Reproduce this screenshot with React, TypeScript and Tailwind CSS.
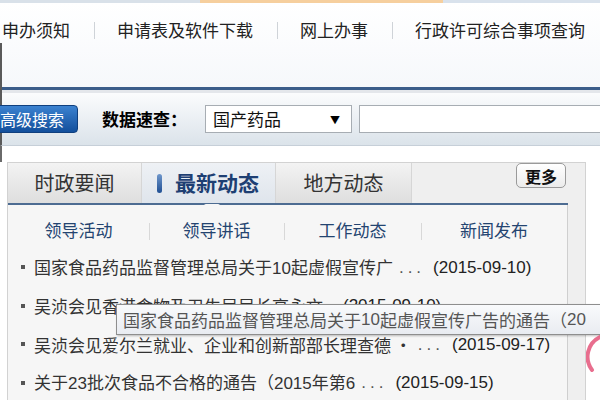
import React from "react";

const cjk = { fontFamily: '"Noto Sans CJK SC", "Noto Sans", sans-serif' };
const latin = { fontFamily: '"Liberation Sans", "Noto Sans CJK SC", sans-serif' };

const navItems = ["申办须知", "申请表及软件下载", "网上办事", "行政许可综合事项查询"];
const subNav = [
  { label: "领导活动", w: "w-[141px]" },
  { label: "领导讲话", w: "w-[135px]" },
  { label: "工作动态", w: "w-[137px]" },
  { label: "新闻发布", w: "flex-1" },
];

const news = [
  { title: "国家食品药品监督管理总局关于10起虚假宣传广", dots: true, date: "(2015-09-10)" },
  { title: "吴浈会见香港食物及卫生局局长高永文", dots: false, date: "(2015-09-10)" },
  { title: "吴浈会见爱尔兰就业、企业和创新部部长理查德 ·", dots: true, date: "(2015-09-17)" },
  { title: "关于23批次食品不合格的通告（2015年第6", dots: true, date: "(2015-09-15)" },
];

function Title({ text }: { text: string }) {
  // split ascii digits so they get the narrow latin face
  const parts = text.split(/(\d+)/);
  return (
    <span className="whitespace-nowrap">
      {parts.map((p, i) =>
        /^\d+$/.test(p) ? (
          <span key={i} style={latin}>{p}</span>
        ) : (
          <span key={i}>{p}</span>
        )
      )}
    </span>
  );
}

export default function App() {
  return (
    <div className="relative w-[600px] h-[400px] overflow-hidden bg-white text-[#222]" style={cjk}>
      {/* top strip */}
      <div className="flex h-[3px]">
        <div className="w-[200px] bg-[#d9e1e9]" />
        <div className="w-[243px] bg-[#f6cf9e]" />
        <div className="flex-1 bg-[#d9e2ec]" />
      </div>

      {/* top nav */}
      <div className="h-[84px] bg-gradient-to-b from-white to-[#f6f8fb]">
        <div className="flex items-center h-[40px] pt-[14px] pl-[2px] text-[17px] leading-[26px] text-[#222]">
          {navItems.map((n, i) => (
            <React.Fragment key={n}>
              {i > 0 && <span className="ml-[24px] mr-[22px] h-[17px] w-px bg-[#cfd3d8]" />}
              <span className="whitespace-nowrap">{n}</span>
            </React.Fragment>
          ))}
        </div>
        <div className="h-[44px] border-l-2 border-[#5a5a5a]" />
      </div>
      <div className="h-[3px] bg-[#3b5d8a] border-l-2 border-[#5a5a5a]" />
      <div className="h-[3px] bg-[#e4e7eb] border-l-2 border-[#5a5a5a]" />

      {/* search bar */}
      <div className="flex items-center h-[53px] border-l-2 border-[#5a5a5a] border-b border-b-[#c6cfd8] bg-gradient-to-b from-[#fbfcfd] to-[#dbe3ea]">
        <div className="-ml-[8px] flex items-center h-[28px] w-[84px] pl-[5px] rounded-[4px] bg-gradient-to-b from-[#3b82d0] to-[#124f9c] border border-[#0f3f7e] text-[16px] text-white whitespace-nowrap">
          高级搜索
        </div>
        <span className="ml-[24px] text-[17px] font-bold text-black whitespace-nowrap">数据速查：</span>
        <div className="ml-[18px] flex items-center h-[28px] w-[147px] pl-[7px] pr-[11px] bg-white border border-[#a7adb3] text-[17px] text-[#111]">
          <span className="flex-1 whitespace-nowrap">国产药品</span>
          <span className="text-[10px] text-black">▼</span>
        </div>
        <div className="ml-[7px] h-[28px] flex-1 -mr-[4px] bg-white border border-[#a7adb3]" />
      </div>

      {/* news panel */}
      <div className="h-[16px] border-l-2 border-[#6a6a6a]" />
      <div className="ml-[7px] w-[579px] h-[240px] flex border-l border-r border-t border-[#d2d2d2] bg-[#efefef]">
        <div className="w-[560px] flex flex-col">
          {/* tabs */}
          <div className="flex h-[44px]">
            <div className="w-[134px] flex items-center justify-center border-r border-[#d6d6d6] bg-gradient-to-b from-[#f3f3f3] to-[#dedede] text-[20px] text-[#333]">
              时政要闻
            </div>
            <div className="w-[134px] flex items-center pl-[15px] border-r border-[#d6d6d6] bg-gradient-to-b from-[#eef1f5] to-[#dfe5ec]">
              <span className="w-[5px] h-[19px] rounded-full bg-gradient-to-b from-[#6f97cc] to-[#1f4f93]" />
              <span className="ml-[13px] text-[21px] font-bold text-[#1e3f73] whitespace-nowrap">最新动态</span>
            </div>
            <div className="w-[136px] flex items-center justify-center border-r border-[#d6d6d6] bg-gradient-to-b from-[#f3f3f3] to-[#dedede] text-[20px] text-[#333]">
              地方动态
            </div>
            <div className="flex-1 flex justify-end items-start pr-[2px]">
              <div className="h-[25px] w-[50px] flex items-center justify-center rounded-[5px] border border-[#9a9a9a] bg-gradient-to-b from-white to-[#ececec] text-[16px] font-bold text-[#111]">
                更多
              </div>
            </div>
          </div>

          {/* blue rule with notch */}
          <div className="relative h-[2px] bg-[#4d6c92]">
            <svg className="absolute left-[196px] top-[1px]" width="16" height="8" viewBox="0 0 16 8">
              <path d="M0 0 L8 7 L16 0" fill="#f6f6f6" stroke="#8a9cb3" strokeWidth="1" />
            </svg>
          </div>

          {/* content */}
          <div className="relative flex-1 bg-[#f6f6f6] border-r border-[#cfcfcf]">
            <div className="flex h-[43px] pt-[6px] text-[17px] text-[#244470]">
              {subNav.map((s, i) => (
                <div key={s.label} className={`${s.w} flex items-center justify-center relative`}>
                  {i > 0 && <span className="absolute left-0 top-[12px] h-[17px] w-px bg-[#d8d8d8]" />}
                  <span className="whitespace-nowrap">{s.label}</span>
                </div>
              ))}
            </div>

            <ul className="text-[17px] text-[#333]">
              {news.map((n) => (
                <li key={n.date + n.title} className="flex items-center h-[38.5px] pl-[13px]">
                  <span className="w-[4px] h-[4px] bg-[#555] mr-[9px] shrink-0" />
                  <Title text={n.title} />
                  {n.dots && <span className="ml-[6px] tracking-[4px] text-[#555] whitespace-nowrap" style={latin}>...</span>}
                  <span className={`${n.dots ? "ml-[8px]" : "ml-[20px]"} whitespace-nowrap text-[#222]`} style={latin}>
                    {n.date}
                  </span>
                </li>
              ))}
            </ul>

            {/* hover tooltip */}
            <div className="absolute left-[108px] top-[99px] h-[31px] w-[500px] flex items-center pl-[6px] border border-[#8e8e8e] bg-gradient-to-b from-[#f9fafc] to-[#e9ecf1] shadow-[1px_1px_2px_rgba(0,0,0,0.25)] text-[17px] text-[#555] whitespace-nowrap">
              国家食品药品监督管理总局关于<span style={latin}>10</span>起虚假宣传广告的通告（<span style={latin}>20</span>
            </div>
          </div>
        </div>
      </div>

      {/* partial red ring at the right edge */}
      <svg className="absolute left-[586px] top-[334px]" width="14" height="40" viewBox="0 0 14 40">
        <path d="M14 3 A22 22 0 0 0 6 36" fill="none" stroke="#e4557a" strokeWidth="4" strokeLinecap="round" opacity="0.85" />
      </svg>
    </div>
  );
}
